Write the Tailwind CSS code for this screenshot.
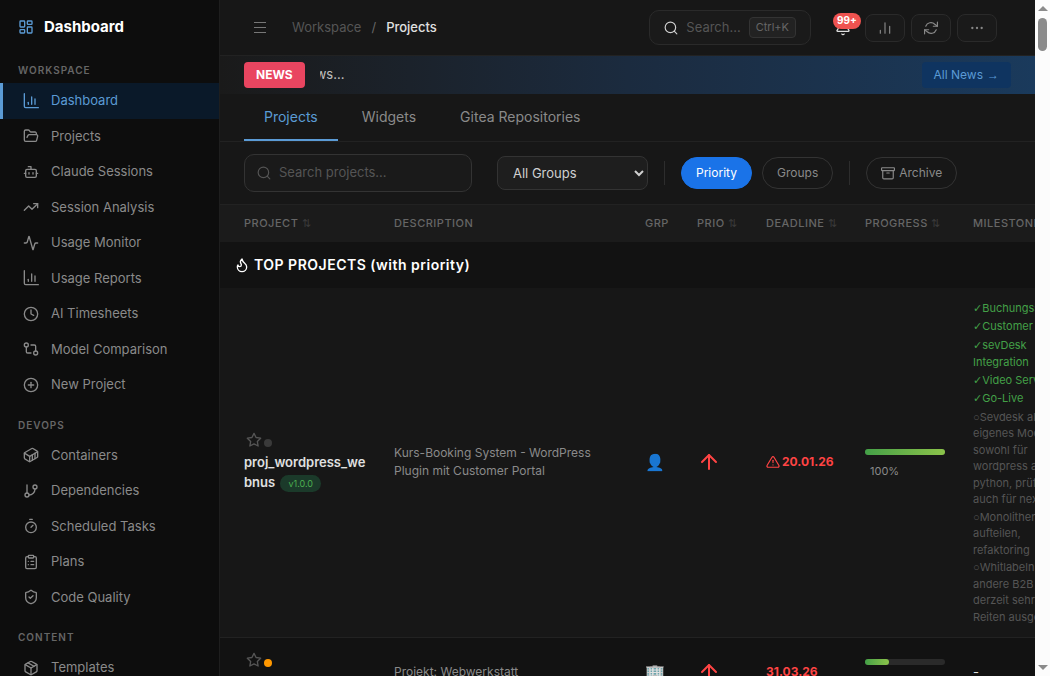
<!DOCTYPE html>
<html lang="en">
  <head>
    <meta charset="UTF-8" />
    <meta name="viewport" content="width=device-width, initial-scale=1.0">
    <title>Dashboard - Projects</title>
    <script src="https://cdn.jsdelivr.net/npm/@tailwindcss/browser@4"></script>
  </head>
  <body class="h-screen overflow-hidden flex bg-[#171717] text-[#8a8a8a] text-[13px] leading-normal font-['Inter','Liberation_Sans',sans-serif]">

    <!-- Sidebar -->
    <aside class="w-[220px] shrink-0 h-full overflow-hidden bg-[#0d0d0d] border-r border-[#1e1e1e]">
      <div class="h-[54px] px-[18px] flex items-center gap-2.5">
        <svg class="w-4 h-4 text-[#5b9bd5]" fill="none" stroke="currentColor" stroke-width="2" stroke-linecap="round" stroke-linejoin="round" viewBox="0 0 24 24"><rect width="7" height="9" x="3" y="3" rx="1"/><rect width="7" height="5" x="14" y="3" rx="1"/><rect width="7" height="9" x="14" y="12" rx="1"/><rect width="7" height="5" x="3" y="16" rx="1"/></svg>
        <span class="text-[15px] font-bold text-white">Dashboard</span>
      </div>

      <nav class="[&_svg]:w-4 [&_svg]:h-4 [&_svg]:shrink-0 [&_svg]:fill-none [&_svg]:stroke-current [&_svg]:stroke-2 [&_a]:flex [&_a]:items-center [&_a]:gap-3 [&_a]:py-2 [&_a]:pl-5 [&_a]:border-l-[3px]">
        <h2 class="px-[18px] pt-[9px] pb-[5px] text-[10px] font-semibold tracking-[1px] text-[#666]">WORKSPACE</h2>
        <a href="#" class="border-[#5b9bd5] bg-[#0a1929] text-[#5b9bd5]">
          <svg stroke-linecap="round" stroke-linejoin="round" viewBox="0 0 24 24"><path d="M2 1v19a2 2 0 0 0 2 2h19"/><path d="M8 17v-3"/><path d="M13 17V6"/><path d="M18 17v-8"/></svg>
          Dashboard
        </a>
        <a href="#" class="border-transparent">
          <svg stroke-linecap="round" stroke-linejoin="round" viewBox="0 0 24 24"><path d="m6 14 1.5-2.9A2 2 0 0 1 9.24 10H20a2 2 0 0 1 1.94 2.5l-1.54 6a2 2 0 0 1-1.95 1.5H4a2 2 0 0 1-2-2V5a2 2 0 0 1 2-2h3.9a2 2 0 0 1 1.69.9l.81 1.2a2 2 0 0 0 1.67.9H18a2 2 0 0 1 2 2v2"/></svg>
          Projects
        </a>
        <a href="#" class="border-transparent">
          <svg stroke-linecap="round" stroke-linejoin="round" viewBox="0 0 24 24"><path d="M12 8V4H8"/><rect width="16" height="12" x="4" y="8" rx="2"/><path d="M2 14h2"/><path d="M20 14h2"/><path d="M15 13v2"/><path d="M9 13v2"/></svg>
          Claude Sessions
        </a>
        <a href="#" class="border-transparent">
          <svg stroke-linecap="round" stroke-linejoin="round" viewBox="0 0 24 24"><path d="M16 7h6v6"/><path d="m22 7-8.5 8.5-5-5L2 17"/></svg>
          Session Analysis
        </a>
        <a href="#" class="border-transparent">
          <svg stroke-linecap="round" stroke-linejoin="round" viewBox="0 0 24 24"><path d="M22 12h-2.48a2 2 0 0 0-1.93 1.46l-2.35 8.36a.25.25 0 0 1-.48 0L9.24 2.18a.25.25 0 0 0-.48 0l-2.35 8.36A2 2 0 0 1 4.49 12H2"/></svg>
          Usage Monitor
        </a>
        <a href="#" class="border-transparent">
          <svg stroke-linecap="round" stroke-linejoin="round" viewBox="0 0 24 24"><path d="M2 1v19a2 2 0 0 0 2 2h19"/><path d="M8 17v-3"/><path d="M13 17V6"/><path d="M18 17v-8"/></svg>
          Usage Reports
        </a>
        <a href="#" class="border-transparent">
          <svg stroke-linecap="round" stroke-linejoin="round" viewBox="0 0 24 24"><circle cx="12" cy="12" r="10"/><path d="M12 6v6l4 2"/></svg>
          AI Timesheets
        </a>
        <a href="#" class="border-transparent">
          <svg stroke-linecap="round" stroke-linejoin="round" viewBox="0 0 24 24"><circle cx="5" cy="6" r="3"/><path d="M12 6h5a2 2 0 0 1 2 2v7"/><circle cx="19" cy="18" r="3"/><path d="M12 18H7a2 2 0 0 1-2-2V9"/></svg>
          Model Comparison
        </a>
        <a href="#" class="border-transparent">
          <svg stroke-linecap="round" stroke-linejoin="round" viewBox="0 0 24 24"><circle cx="12" cy="12" r="10"/><path d="M8 12h8"/><path d="M12 8v8"/></svg>
          New Project
        </a>

        <h2 class="px-[18px] pt-[15px] pb-[5px] text-[10px] font-semibold tracking-[1px] text-[#666]">DEVOPS</h2>
        <a href="#" class="border-transparent">
          <svg stroke-linecap="round" stroke-linejoin="round" viewBox="0 0 24 24"><path d="M22 7.7c0-.6-.4-1.2-.8-1.5l-6.3-3.9a1.72 1.72 0 0 0-1.7 0l-10.3 6c-.5.2-.9.8-.9 1.4v6.6c0 .5.4 1.2.8 1.5l6.3 3.9a1.72 1.72 0 0 0 1.7 0l10.3-6c.5-.3.9-1 .9-1.5Z"/><path d="M10 21.9V14L2.1 9.1"/><path d="m10 14 11.9-6.9"/><path d="M14 19.8v-8.1"/><path d="M18 17.5V9.4"/></svg>
          Containers
        </a>
        <a href="#" class="border-transparent">
          <svg stroke-linecap="round" stroke-linejoin="round" viewBox="0 0 24 24"><path d="M6 3v12"/><circle cx="18" cy="6" r="3"/><circle cx="6" cy="18" r="3"/><path d="M18 9a9 9 0 0 1-9 9"/></svg>
          Dependencies
        </a>
        <a href="#" class="border-transparent">
          <svg stroke-linecap="round" stroke-linejoin="round" viewBox="0 0 24 24"><path d="M10 2h4"/><path d="m12 14 3-3"/><circle cx="12" cy="14" r="8"/></svg>
          Scheduled Tasks
        </a>
        <a href="#" class="border-transparent">
          <svg stroke-linecap="round" stroke-linejoin="round" viewBox="0 0 24 24"><rect width="8" height="4" x="8" y="2" rx="1"/><path d="M16 4h2a2 2 0 0 1 2 2v14a2 2 0 0 1-2 2H6a2 2 0 0 1-2-2V6a2 2 0 0 1 2-2h2"/><path d="M12 11h4"/><path d="M12 16h4"/><path d="M8 11h.01"/><path d="M8 16h.01"/></svg>
          Plans
        </a>
        <a href="#" class="border-transparent">
          <svg stroke-linecap="round" stroke-linejoin="round" viewBox="0 0 24 24"><path d="M20 13c0 5-3.5 7.5-7.66 8.95a1 1 0 0 1-.67-.01C7.5 20.5 4 18 4 13V6a1 1 0 0 1 1-1c2 0 4.5-1.2 6.24-2.72a1.17 1.17 0 0 1 1.52 0C14.51 3.81 17 5 19 5a1 1 0 0 1 1 1z"/><path d="m9 12 2 2 4-4"/></svg>
          Code Quality
        </a>

        <h2 class="px-[18px] pt-[15px] pb-[5px] text-[10px] font-semibold tracking-[1px] text-[#666]">CONTENT</h2>
        <a href="#" class="border-transparent">
          <svg stroke-linecap="round" stroke-linejoin="round" viewBox="0 0 24 24"><path d="m7.5 4.27 9 5.15"/><path d="M21 8a2 2 0 0 0-1-1.73l-7-4a2 2 0 0 0-2 0l-7 4A2 2 0 0 0 3 8v8a2 2 0 0 0 1 1.73l7 4a2 2 0 0 0 2 0l7-4A2 2 0 0 0 21 16Z"/><path d="m3.3 7 8.7 5 8.7-5"/><path d="M12 22V12"/></svg>
          Templates
        </a>
      </nav>
    </aside>

    <!-- Main -->
    <main class="flex-1 min-w-0 h-full overflow-hidden">
      <header class="h-14 pl-6 pr-[38px] flex items-center border-b border-[#222]">
        <button aria-label="Toggle menu" class="w-8 h-8 flex items-center justify-center text-[#777]">
          <svg class="w-4 h-4" fill="none" stroke="currentColor" viewBox="0 0 16 16"><path d="M2 2.500h12M2 7.500h12M2 12.500h12"/></svg>
        </button>
        <div class="ml-4 flex items-center gap-2.5">
          <a href="#" class="text-[#555]">Workspace</a>
          <span class="text-[#666]">/</span>
          <span class="font-medium text-[#e0e0e0]">Projects</span>
        </div>

        <button class="ml-auto h-[35px] px-3.5 flex items-center gap-2 rounded-[10px] border border-[#2a2a2a] bg-[#1a1a1a] text-[#555]">
          <svg class="w-3.5 h-3.5 text-[#d0d0d0]" fill="none" stroke="currentColor" stroke-width="2" stroke-linecap="round" stroke-linejoin="round" viewBox="0 0 24 24"><circle cx="11" cy="11" r="9"/><path d="m22 22-4.500-4.500"/></svg>
          <span>Search...</span>
          <kbd class="h-[21px] px-1.5 flex items-center rounded border border-[#333] bg-[#222] text-[11px] text-[#666] font-['Inter',sans-serif]">Ctrl+K</kbd>
        </button>

        <button aria-label="Notifications" class="relative ml-[22px] mr-[13px] w-[19px] h-7 flex items-center justify-center text-[#e0e0e0]">
          <svg class="w-4 h-4" fill="none" stroke="currentColor" stroke-width="2" stroke-linecap="round" stroke-linejoin="round" viewBox="0 0 24 24"><path d="M10.268 21a2 2 0 0 0 3.464 0"/><path d="M3.262 15.326A1 1 0 0 0 4 17h16a1 1 0 0 0 .74-1.673C19.410 13.956 18 12.499 18 8A6 6 0 0 0 6 8c0 4.499-1.411 5.956-2.738 7.326"/></svg>
          <span class="absolute left-0 -top-px h-4 px-1 flex items-center rounded-full bg-[#ef5350] text-[10px] font-bold text-white">99+</span>
        </button>

        <div class="flex gap-1.5 text-[#888]">
          <button aria-label="Statistics" class="w-10 h-7 flex items-center justify-center rounded-lg border border-[#2a2a2a] bg-[#1a1a1a]">
            <svg class="w-3.5 h-3.5" fill="none" stroke="currentColor" stroke-width="2" stroke-linecap="round" viewBox="0 0 24 24"><path d="M4 21v-5M12 21V3M20 21V9"/></svg>
          </button>
          <button aria-label="Refresh" class="w-10 h-7 flex items-center justify-center rounded-lg border border-[#2a2a2a] bg-[#1a1a1a]">
            <svg class="w-3.5 h-3.5" fill="none" stroke="currentColor" stroke-width="2" stroke-linecap="round" stroke-linejoin="round" viewBox="0 0 24 24"><path d="M23 2v7h-7"/><path d="M1 22v-7h7"/><path d="M3 9a9.500 9.500 0 0 1 15.500-3.500L23 9M1 15l4.500 3.500A9.500 9.500 0 0 0 21 15"/></svg>
          </button>
          <button aria-label="More" class="w-10 h-7 flex items-center justify-center rounded-lg border border-[#2a2a2a] bg-[#1a1a1a]">
            <svg class="w-3.5 h-3.5" fill="currentColor" viewBox="0 0 24 24"><circle cx="4" cy="12" r="2"/><circle cx="12" cy="12" r="2"/><circle cx="20" cy="12" r="2"/></svg>
          </button>
        </div>
      </header>

      <!-- News ticker -->
      <div class="h-[38px] px-6 flex items-center bg-linear-to-r from-[#1a1a1a] via-[#1b2b3f] to-[#1a3a5c]">
        <span class="h-[26px] px-3 flex items-center rounded bg-[#e94560] text-[12px] font-bold text-white">NEWS</span>
        <div class="ml-[15px] flex-1 overflow-hidden whitespace-nowrap text-[#c0c0c0]">
          <span class="inline-block -ml-[72px]">Loading news...</span>
        </div>
        <a href="#" class="h-[26px] px-3 flex items-center gap-1 rounded bg-[#0f3460] text-[12px] text-[#5b9bd5]">All News <span class="font-['Liberation_Sans',sans-serif]">→</span></a>
      </div>

      <!-- Tabs -->
      <div role="tablist" class="h-12 px-6 flex gap-1 border-b border-[#222] text-[14px]">
        <button role="tab" aria-selected="true" class="px-5 border-b-2 border-[#5b9bd5] text-[#5b9bd5]">Projects</button>
        <button role="tab" aria-selected="false" class="px-5 border-b-2 border-transparent">Widgets</button>
        <button role="tab" aria-selected="false" class="px-5 border-b-2 border-transparent">Gitea Repositories</button>
      </div>

      <!-- Filters -->
      <div class="h-[62px] px-6 flex items-center">
        <label class="w-[228px] h-[38px] px-3 flex items-center gap-2 rounded-[10px] border border-[#333] bg-[#1a1a1a]">
          <svg class="w-3.5 h-3.5 shrink-0 text-[#555]" fill="none" stroke="currentColor" stroke-width="2" stroke-linecap="round" viewBox="0 0 24 24"><circle cx="11" cy="11" r="9"/><path d="m22 22-4.500-4.500"/></svg>
          <input type="text" aria-label="Search projects" placeholder="Search projects..." class="flex-1 min-w-0 bg-transparent placeholder:text-[#555] outline-none">
        </label>
        <select aria-label="Group" class="ml-[25px] w-[151px] h-[34px] pl-[11px] rounded-lg border border-[#333] bg-[#1e1e1e] text-[#d0d0d0]">
          <option>All Groups</option>
        </select>
        <div class="mx-4 w-px h-6 bg-[#2d2d2d]"></div>
        <div class="flex gap-2.5 text-[12px]">
          <button class="h-8 px-3.5 rounded-full border border-[#1a73e8] bg-[#1a73e8] text-white">Priority</button>
          <button class="h-8 px-3.5 rounded-full border border-[#333]">Groups</button>
        </div>
        <div class="mx-4 w-px h-6 bg-[#2d2d2d]"></div>
        <button class="h-8 px-3.5 flex items-center gap-1 rounded-full border border-[#333] text-[12px]">
          <svg class="w-3.5 h-3.5" fill="none" stroke="currentColor" stroke-width="2" stroke-linecap="round" stroke-linejoin="round" viewBox="0 0 24 24"><rect width="22" height="5" x="1" y="3" rx="1"/><path d="M3 8v12a2 2 0 0 0 2 2h14a2 2 0 0 0 2-2V8"/><path d="M10 12h4"/></svg>
          Archive
        </button>
      </div>

      <!-- Project table, wider than the viewport -->
      <table class="w-[960px] table-fixed border-collapse text-left [&_th]:px-3.5 [&_td]:px-3.5 [&_td]:py-2.5 [&_td]:align-middle">
        <colgroup>
          <col class="w-[160px]"><col class="w-[251px]"><col class="w-[52px]"><col class="w-[69px]"><col class="w-[99px]"><col class="w-[108px]"><col>
        </colgroup>
        <thead>
          <tr class="h-[37px] bg-[#1b1b1b] border-t border-[#222] text-[11px] text-[#666] whitespace-nowrap [&_th]:font-medium [&_th]:tracking-[0.5px] [&_span]:text-[#3a3a3a]">
            <th class="pl-6!">PROJECT <span>⇅</span></th>
            <th>DESCRIPTION</th>
            <th>GRP</th>
            <th>PRIO <span>⇅</span></th>
            <th>DEADLINE <span>⇅</span></th>
            <th>PROGRESS <span>⇅</span></th>
            <th>MILESTONES</th>
          </tr>
        </thead>
        <tbody>
          <tr class="h-[46px] bg-[#121212]">
            <td colspan="7" class="text-[14px] font-semibold text-white">
              <div class="flex items-center gap-1 tracking-[0.5px]">
                <svg class="w-4 h-4" fill="none" stroke="currentColor" stroke-width="2" stroke-linecap="round" stroke-linejoin="round" viewBox="0 0 24 24"><path d="M8.500 14.500A2.500 2.500 0 0 0 11 12c0-1.380-.500-2-1-3-1.072-2.143-.224-4.054 2-6 .500 2.500 2 4.900 4 6.500 2 1.600 3 3.500 3 5.500a7 7 0 1 1-14 0c0-1.153.433-2.294 1-3a2.500 2.500 0 0 0 2.500 2.500z"/></svg>
                TOP PROJECTS (with priority)
              </div>
            </td>
          </tr>
          <tr class="h-[350px] border-b border-[#222] bg-[#171717]">
            <td class="pl-6!">
              <div class="flex items-center gap-0.5 pl-0.5">
                <svg class="w-4 h-4 text-[#555]" fill="none" stroke="currentColor" stroke-width="2" stroke-linejoin="round" viewBox="0 0 24 24"><path d="m12 2 3.090 6.260L22 9.270l-5 4.870 1.180 6.880L12 17.770l-6.180 3.250L7 14.140 2 9.270l6.910-1.010z"/></svg>
                <span class="mt-1.5 w-2 h-2 rounded-full bg-[#3a3a3a]"></span>
              </div>
              <div class="mt-1 break-all font-semibold leading-5 text-[#e0e0e0]">proj_wordpress_webnus <span class="inline-block ml-0.5 px-2 rounded-full bg-[#1b3a2a] text-[9px] leading-[17px] font-normal text-[#4caf50]">v1.0.0</span></div>
            </td>
            <td class="text-[12px] leading-[18px]">Kurs-Booking System - WordPress Plugin mit Customer Portal</td>
            <td class="text-[16px]">👤</td>
            <td class="text-[#ff4444]"><svg class="w-6 h-6" fill="none" stroke="currentColor" stroke-width="2" stroke-linecap="round" stroke-linejoin="round" viewBox="0 0 24 24"><path d="m5 12 7-7 7 7"/><path d="M12 19V5"/></svg></td>
            <td>
              <div class="flex items-center gap-0.5 text-[12px] font-bold text-[#ff4444] whitespace-nowrap">
                <svg class="w-3.5 h-3.5 shrink-0" fill="none" stroke="currentColor" stroke-width="2" stroke-linecap="round" stroke-linejoin="round" viewBox="0 0 24 24"><path d="M10.290 3.860 1.820 18a2 2 0 0 0 1.710 3h16.940a2 2 0 0 0 1.710-3L13.710 3.860a2 2 0 0 0-3.420 0z"/><path d="M12 9v4"/><path d="M12 17h.01"/></svg>
                20.01.26
              </div>
            </td>
            <td>
              <div class="mt-1 h-1.5 rounded-full bg-[#2a2a2a]"><div class="h-full rounded-full bg-linear-to-r from-[#43a047] to-[#8bc34a]" style="width: 100%"></div></div>
              <div class="mt-2 pl-[5px] text-[11px]">100%</div>
            </td>
            <td class="text-[11px] text-[#555] whitespace-nowrap">
              <ul class="flex flex-col gap-px [&_i]:not-italic">
                <li class="text-[#43a047]"><i class="font-['DejaVu_Sans',sans-serif]">✓</i>Buchungssystem</li>
                <li class="text-[#43a047]"><i class="font-['DejaVu_Sans',sans-serif]">✓</i>Customer Portal</li>
                <li class="text-[#43a047]"><i class="font-['DejaVu_Sans',sans-serif]">✓</i>sevDesk<br>Integration</li>
                <li class="text-[#43a047]"><i class="font-['DejaVu_Sans',sans-serif]">✓</i>Video Server</li>
                <li class="text-[#43a047]"><i class="font-['DejaVu_Sans',sans-serif]">✓</i>Go-Live</li>
                <li><i class="font-['Liberation_Sans',sans-serif]">○</i>Sevdesk als<br>eigenes Modul<br>sowohl für<br>wordpress als<br>python, prüfen<br>auch für nextjs</li>
                <li><i class="font-['Liberation_Sans',sans-serif]">○</i>Monolithen<br>aufteilen,<br>refaktoring</li>
                <li><i class="font-['Liberation_Sans',sans-serif]">○</i>Whitlabeln<br>andere B2B<br>derzeit sehr<br>Reiten ausgel.</li>
              </ul>
            </td>
          </tr>
          <tr class="h-[69px] bg-[#121212]">
            <td class="pl-6!">
              <div class="flex items-center gap-0.5 pl-0.5">
                <svg class="w-4 h-4 text-[#555]" fill="none" stroke="currentColor" stroke-width="2" stroke-linejoin="round" viewBox="0 0 24 24"><path d="m12 2 3.090 6.260L22 9.270l-5 4.870 1.180 6.880L12 17.770l-6.180 3.250L7 14.140 2 9.270l6.910-1.010z"/></svg>
                <span class="mt-1.5 w-2 h-2 rounded-full bg-[#ff9800]"></span>
              </div>
              <div class="mt-1 font-semibold leading-5 text-[#e0e0e0]">webwerkstatt</div>
            </td>
            <td class="text-[12px] leading-[18px]">Projekt: Webwerkstatt</td>
            <td class="text-[16px]">🏢</td>
            <td class="text-[#ff4444]"><svg class="w-6 h-6" fill="none" stroke="currentColor" stroke-width="2" stroke-linecap="round" stroke-linejoin="round" viewBox="0 0 24 24"><path d="m5 12 7-7 7 7"/><path d="M12 19V5"/></svg></td>
            <td class="text-[12px] font-bold text-[#ff4444]">31.03.26</td>
            <td>
              <div class="mt-1 h-1.5 rounded-full bg-[#2a2a2a]"><div class="h-full rounded-full bg-linear-to-r from-[#43a047] to-[#8bc34a]" style="width: 30%"></div></div>
              <div class="mt-2 pl-[5px] text-[11px]">30%</div>
            </td>
            <td class="text-[#e0e0e0]">-</td>
          </tr>
        </tbody>
      </table>
    </main>

    <!-- Scrollbar -->
    <div class="w-[15px] shrink-0 h-full py-1.5 flex flex-col items-center bg-[#fcfcfc] text-[#8b8b8b]">
      <svg class="w-2.5 h-[5px]" fill="currentColor" viewBox="0 0 10 5"><path d="M5 0l5 5H0z"/></svg>
      <div class="mt-[7px] w-[9px] h-[33px] rounded-full bg-[#8b8b8b]"></div>
      <svg class="mt-auto w-2.5 h-[5px]" fill="currentColor" viewBox="0 0 10 5"><path d="M0 0h10L5 5z"/></svg>
    </div>
  </body>
</html>
